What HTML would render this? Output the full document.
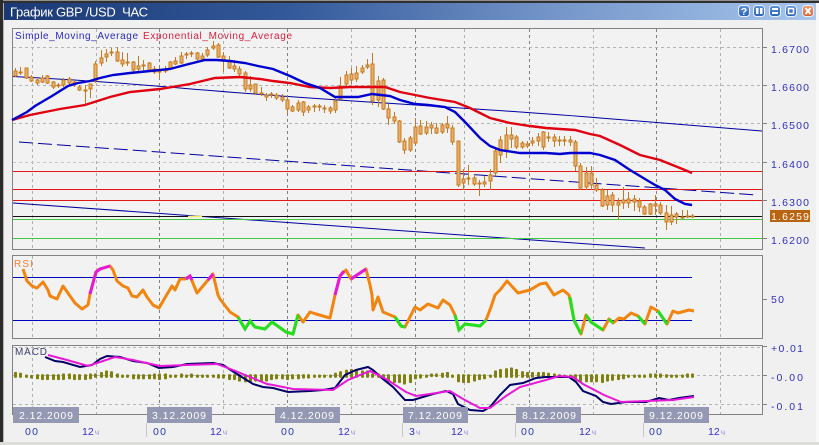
<!DOCTYPE html>
<html><head><meta charset="utf-8"><style>
html,body{margin:0;padding:0;background:#f0f0f0;width:819px;height:445px;overflow:hidden}
svg{display:block;font-family:"Liberation Sans","DejaVu Sans",sans-serif}
</style></head><body>
<svg width="819" height="445" viewBox="0 0 819 445" xmlns="http://www.w3.org/2000/svg">
<defs><linearGradient id="tb" x1="0" x2="1" y1="0" y2="0"><stop offset="0" stop-color="#1a3875"/><stop offset=".35" stop-color="#33599a"/><stop offset=".67" stop-color="#7394c8"/><stop offset="1" stop-color="#a6c6ec"/></linearGradient>
<linearGradient id="bb" x1="0" x2="0" y1="0" y2="1"><stop offset="0" stop-color="#5f94d8"/><stop offset="1" stop-color="#2a62b8"/></linearGradient>
<linearGradient id="br" x1="0" x2="0" y1="0" y2="1"><stop offset="0" stop-color="#f0a070"/><stop offset="1" stop-color="#d86030"/></linearGradient></defs>
<rect width="819" height="445" fill="#f0f0f0"/>
<rect x="0" y="0" width="819" height="1" fill="#909090"/>
<rect x="0" y="1" width="819" height="2" fill="#303030"/>
<rect x="0" y="0" width="3" height="445" fill="#2c2c2c"/>
<rect x="3" y="3" width="1" height="440" fill="#b8b4a8"/>
<rect x="816" y="3" width="3" height="442" fill="#f8f8f8"/>
<rect x="0" y="442" width="819" height="3" fill="#dcdcd8"/>
<rect x="4" y="3" width="812" height="17" fill="url(#tb)"/>
<text x="10" y="16.500" font-size="13" fill="#fff" textLength="138" xml:space="preserve">График GBP /USD  ЧАС</text>
<g stroke="#e8f0fa" stroke-width="1">
<rect x="738.500" y="5.500" width="11" height="11" rx="3" fill="url(#bb)"/>
<rect x="753.500" y="5.500" width="11" height="11" rx="3" fill="url(#bb)"/>
<rect x="769.500" y="5.500" width="11" height="11" rx="3" fill="url(#bb)"/>
<rect x="785.500" y="5.500" width="11" height="11" rx="3" fill="url(#bb)"/>
<rect x="802.500" y="5.500" width="11" height="11" rx="3" fill="url(#br)"/>
</g>
<text x="744" y="15" font-size="10.500" font-weight="bold" fill="#fff" text-anchor="middle">?</text>
<path d="M756 8h2.500v6h-2.500zM760 8h2.500v6h-2.500z" fill="#fff"/>
<path d="M772 8h6v2h-6zM772 12h6v2h-6z" fill="#fff"/>
<path d="M788.500 8.500h5v5h-5z" fill="none" stroke="#fff" stroke-width="1.500"/>
<path d="M805.500 8l5 6M810.500 8l-5 6" stroke="#fff" stroke-width="2"/>

<rect x="12.500" y="28.500" width="750" height="221" fill="#f2f2f2" stroke="#828282"/>
<rect x="12.500" y="255.500" width="750" height="83" fill="#f2f2f2" stroke="#828282"/>
<rect x="12.500" y="345.500" width="750" height="69" fill="#f2f2f2" stroke="#828282"/>

<g fill="none" stroke-dasharray="3 3">
<path d="M32.500 29V249M96.500 29V249M223.500 29V249M351.500 29V249M464.500 29V249M593.500 29V249M720.500 29V249M32.500 256V338M96.500 256V338M223.500 256V338M351.500 256V338M464.500 256V338M593.500 256V338M720.500 256V338M32.500 346V414M96.500 346V414M223.500 346V414M351.500 346V414M464.500 346V414M593.500 346V414M720.500 346V414" stroke="#b0b0b0"/>
<path d="M159.500 29V249M287.500 29V249M415.500 29V249M529.500 29V249M656.500 29V249M159.500 256V338M287.500 256V338M415.500 256V338M529.500 256V338M656.500 256V338M159.500 346V414M287.500 346V414M415.500 346V414M529.500 346V414M656.500 346V414" stroke="#808080"/>
<path d="M13 47.500H762M13 85.500H762M13 123.500H762M13 347.500H762M13 375.500H762M13 404.500H762" stroke="#b4b4b4"/>
<path d="M13 162.500H762" stroke="#c0c8d0"/>
</g>
<path d="M762 47.500h5M762 85.500h5M762 123.500h5M762 162.500h5M762 200.500h5M762 238.500h5M762 299.500h5M762 346.500h5M762 375.500h5M762 404.500h5" stroke="#808080"/>

<path d="M13 76.500Q100 81 180 88T400 104T600 118T762 131" fill="none" stroke="#0000a0" stroke-width="1"/>
<path d="M19 142L757 195" fill="none" stroke="#0000a0" stroke-width="1" stroke-dasharray="14 5"/>
<path d="M13 203L645 248" fill="none" stroke="#0000a0" stroke-width="1"/>
<path d="M13 171.500H762M13 189.500H762M13 200.500H762" stroke="#e01818" stroke-width="1"/>
<path d="M13 216.500H762" stroke="#101010" stroke-width="1"/>
<path d="M188 216.500h14" stroke="#f0f060" stroke-width="1.500"/>
<path d="M13 219.500H762M13 238.500H762" stroke="#40c840" stroke-width="1"/>

<path fill="none" stroke="#c07a20" stroke-width="1" d="M15.500 68V77M20.500 67V75M26.500 68V79M31.500 75V82M37.500 79V85M42.500 75V83M47.500 75V84M53.500 81V89M58.500 83V88M63.500 78V87M69.500 77V85M74.500 80V87M79.500 85V91M85.500 85V105M90.500 84V98M95.500 61V83M101.500 50V66M106.500 49V62M111.500 48V56M117.500 47V62M122.500 52V67M127.500 53V66M133.500 61V73M138.500 56V71M143.500 60V71M149.500 62V71M154.500 66V74M159.500 68V78M165.500 66V73M170.500 61V69M175.500 57V65M181.500 52V64M186.500 52V59M191.500 51V57M197.500 52V61M202.500 53V61M207.500 47V57M213.500 41V50M218.500 43V58M223.500 52V72M229.500 56V69M234.500 60V72M239.500 66V76M245.500 71V92M250.500 76V92M255.500 84V95M261.500 87V96M266.500 93V101M271.500 92V98M276.500 93V100M282.500 94V102M287.500 96V114M292.500 105V112M298.500 100V112M303.500 101V116M308.500 105V113M314.500 104V112M319.500 104V111M324.500 105V113M330.500 106V114M335.500 96V113M340.500 77V100M346.500 71V88M351.500 68V84M356.500 66V82M362.500 65V74M367.500 59V69M372.500 53V105M378.500 76V107M383.500 78V110M388.500 104V125M394.500 112V124M399.500 120V143M404.500 138V154M410.500 136V152M415.500 118V145M420.500 120V135M426.500 121V135M431.500 122V134M436.500 123V134M442.500 123V134M447.500 116V133M452.500 125V145M458.500 141V187M463.500 169V190M468.500 165V185M474.500 174V186M479.500 180V196M484.500 176V187M490.500 169V190M495.500 147V176M500.500 136V163M506.500 127V158M511.500 127V148M516.500 135V149M522.500 141V149M527.500 141V148M532.500 137V146M538.500 133V146M543.500 131V150M548.500 132V142M554.500 134V147M559.500 136V146M564.500 136V146M570.500 136V146M575.500 140V171M580.500 163V190M586.500 167V190M591.500 166V190M596.500 178V192M602.500 188V207M607.500 190V210M612.500 192V212M618.500 198V219M623.500 187V209M628.500 192V208M634.500 195V211M639.500 198V212M644.500 205V215M650.500 203V215M655.500 195V215M660.500 202V215M666.500 205V230M671.500 206V225M676.500 212V224M682.500 210V219M687.500 210V218M692.500 214V218"/>
<path fill="#eab06a" stroke="#c67a1e" stroke-width="1" d="M14 71h3v5h-3zM19 72h3v1h-3zM25 68h3v10h-3zM30 77h3v4h-3zM36 80h3v3h-3zM41 78h3v4h-3zM46 76h3v7h-3zM52 82h3v5h-3zM57 85h3v1h-3zM62 80h3v5h-3zM68 79h3v4h-3zM73 82h3v2h-3zM78 87h3v3h-3zM84 90h3v1h-3zM89 84h3v5h-3zM94 64h3v17h-3zM100 58h3v5h-3zM105 54h3v3h-3zM110 52h3v1h-3zM116 52h3v9h-3zM121 60h3v4h-3zM126 62h3v1h-3zM132 62h3v8h-3zM137 66h3v3h-3zM142 65h3v1h-3zM148 63h3v7h-3zM153 69h3v3h-3zM158 71h3v1h-3zM164 69h3v2h-3zM169 62h3v6h-3zM174 61h3v3h-3zM180 56h3v7h-3zM185 54h3v1h-3zM190 53h3v1h-3zM196 53h3v6h-3zM201 56h3v3h-3zM206 50h3v5h-3zM212 46h3v2h-3zM217 45h3v12h-3zM222 56h3v4h-3zM228 61h3v7h-3zM233 66h3v3h-3zM238 69h3v5h-3zM244 73h3v16h-3zM249 85h3v4h-3zM254 84h3v9h-3zM260 93h3v1h-3zM265 95h3v2h-3zM270 94h3v1h-3zM275 95h3v3h-3zM281 97h3v3h-3zM286 100h3v9h-3zM291 107h3v4h-3zM297 103h3v7h-3zM302 102h3v10h-3zM307 107h3v3h-3zM313 106h3v1h-3zM318 106h3v1h-3zM323 108h3v1h-3zM329 108h3v3h-3zM334 101h3v9h-3zM339 86h3v13h-3zM345 75h3v9h-3zM350 74h3v6h-3zM355 73h3v6h-3zM361 68h3v4h-3zM366 65h3v2h-3zM371 64h3v37h-3zM377 81h3v19h-3zM382 80h3v29h-3zM387 109h3v9h-3zM393 117h3v4h-3zM398 121h3v21h-3zM403 141h3v9h-3zM409 138h3v12h-3zM414 127h3v16h-3zM419 126h3v8h-3zM425 127h3v6h-3zM430 125h3v3h-3zM435 128h3v5h-3zM441 125h3v7h-3zM446 124h3v4h-3zM451 128h3v14h-3zM457 141h3v44h-3zM462 179h3v4h-3zM467 178h3v1h-3zM473 178h3v6h-3zM478 183h3v1h-3zM483 182h3v2h-3zM489 175h3v6h-3zM494 151h3v22h-3zM499 140h3v15h-3zM505 135h3v15h-3zM510 135h3v4h-3zM515 137h3v10h-3zM521 143h3v4h-3zM526 144h3v2h-3zM531 141h3v2h-3zM537 137h3v4h-3zM542 132h3v15h-3zM547 137h3v1h-3zM553 137h3v4h-3zM558 140h3v1h-3zM563 140h3v1h-3zM569 140h3v2h-3zM574 142h3v24h-3zM579 166h3v22h-3zM585 173h3v14h-3zM590 173h3v12h-3zM595 185h3v5h-3zM601 190h3v16h-3zM606 196h3v9h-3zM611 195h3v10h-3zM617 202h3v3h-3zM622 200h3v3h-3zM627 199h3v4h-3zM633 199h3v3h-3zM638 201h3v6h-3zM643 207h3v7h-3zM649 204h3v10h-3zM654 204h3v2h-3zM659 205h3v8h-3zM665 213h3v9h-3zM670 215h3v7h-3zM675 214h3v3h-3zM681 217h3v1h-3zM686 216h3v1h-3zM691 216h3v1h-3z"/>

<polyline fill="none" stroke="#e00010" stroke-width="2.400" points="12,120 30,115 60,109 85,105 110,97 130,92 160,89 190,84 215,78 240,77 260,79 273,81 290,83 310,87 330,88 350,87 385,87 400,92 415,95 430,98 455,102 470,108 490,118 510,123 530,126 546,128 575,130 590,134 600,136 620,145 640,155 660,160 680,168 692,173"/>
<polyline fill="none" stroke="#0000d0" stroke-width="2.400" points="12,120 27,112 35,106 52,96 68,86 78,83 90,81 100,78 113,75 130,73 150,71 170,69 185,65 205,60 217,60 230,61 245,63 258,66 273,69 290,76 305,83 320,88 335,97 345,97 358,97 372,94 390,96 400,100 415,104 428,105 445,107 455,112 465,122 480,138 490,146 500,150 520,153 546,153 560,154 570,153 590,153 600,155 615,160 630,170 645,179 655,185 665,190 675,199 685,204 692,205"/>

<text x="15" y="39" font-size="10" fill="#2a2ac0" textLength="123">Simple_Moving_Average</text>
<text x="143" y="39" font-size="10" fill="#d82040" textLength="149">Exponential_Moving_Average</text>

<path d="M13 277.500H692M13 320.500H692" stroke="#0000c0" stroke-width="1"/>
<polyline fill="none" stroke="#f28410" stroke-width="3" stroke-linejoin="round" points="23,269 27,281 32,286 37,288 43,282 48,290 50,296 57,299 63,286 70,296 75,303 82,309 88,305 90,294 96,272 100,269 110,266 113,270 117,281 123,286 128,288 132,296 137,297 143,290 147,297 153,305 159,308 166,296 172,286 175,290 180,279 185,279 190,276 197,293 203,286 208,280 213,274 218,295 220,299 230,312 238,317 245,329 250,321 255,327 265,329 272,322 286,332 293,334 298,315 303,322 310,312 316,314 330,318 335,295 340,276 346,270 351,279 366,269 370,285 372,295 373,310 378,297 383,312 395,317 401,326 405,327 415,307 420,310 428,304 438,308 443,300 450,305 455,315 459,330 465,324 480,326 486,320 491,307 495,295 500,290 507,281 518,293 530,290 540,284 546,283 554,295 563,290 569,295 574,320 581,334 586,315 591,322 603,330 609,319 613,323 619,318 624,319 631,313 638,316 645,324 651,307 658,311 667,324 673,311 678,313 689,310 694,311"/>
<path fill="none" stroke="#e818d8" stroke-width="3" d="M90 294L96 272 100 269 110 266M186 279L190 276 192 280M208 280L213 274M335 295L340 276 344 271M351 279L366 269"/>
<path fill="none" stroke="#20e020" stroke-width="3" d="M238 317L245 329 250 321 255 327 265 329 272 322 286 332 293 334 298 315M395 317L401 326 405 327M455 315L459 330 465 324 480 326 486 320M570 297L574 320 581 334M586 315L591 322 603 330M609 319L613 323M638 316L645 324M658 311L667 324"/>
<text x="14" y="267" font-size="10" fill="#f08030" textLength="19">RSI</text>
<text x="771" y="303" font-size="10.500" fill="#3030c0" textLength="13">50</text>

<path transform="translate(0,94) scale(1,.75)" fill="none" stroke="#808010" stroke-width="3" stroke-linecap="round" d="M15.500 372V377M20.500 373V377M26.500 375.500V377M31.500 376V378M37.500 375V379M42.500 375V380M47.500 375V380M53.500 375V380M58.500 375V380M63.500 374V380M69.500 374V379M74.500 375V380M79.500 375V380M85.500 375V380M90.500 374V379M95.500 374V377M101.500 372V377M106.500 370V377M111.500 371V377M117.500 374V377M122.500 375.500V377M127.500 375.500V377M133.500 375V379M138.500 375V379M143.500 375V379M149.500 375V379M154.500 374V379M159.500 374V380M165.500 374V379M170.500 375.500V377M175.500 375.500V377M181.500 374V377M186.500 375.500V377M191.500 374V377M197.500 375.500V377M202.500 375.500V377M207.500 375.500V377M213.500 375.500V377M218.500 375V378M223.500 375V378M229.500 375V380M234.500 375V380M239.500 375V382M245.500 375V383M250.500 375V383M255.500 375V382M261.500 375V382M266.500 375V382M271.500 375V380M276.500 375V379M282.500 375V379M287.500 375V380M292.500 375V379M298.500 375V379M303.500 375V378M308.500 375V378M314.500 375.500V377M319.500 375.500V377M324.500 375.500V377M330.500 375.500V377M335.500 373V377M340.500 371V377M346.500 369V377M351.500 368V377M356.500 369V377M362.500 370V377M367.500 370V377M372.500 374V377M378.500 374V377M383.500 375V380M388.500 375V383M394.500 375V384M399.500 375V384M404.500 375V386M410.500 375V384M415.500 375V379M420.500 375V378M426.500 375.500V377M431.500 374V376M436.500 374V376M442.500 373V377M447.500 372V377M452.500 375.500V377M458.500 375V383M463.500 375V384M468.500 375V384M474.500 375V382M479.500 375V380M484.500 375V379M490.500 375.500V377M495.500 370V377M500.500 368V377M506.500 367V377M511.500 366V377M516.500 368V377M522.500 371V377M527.500 372V377M532.500 372V377M538.500 372V377M543.500 372V377M548.500 373V377M554.500 374V377M559.500 375V377M564.500 375.500V377M570.500 375.500V377M575.500 375V382M580.500 375V383M586.500 375V383M591.500 375V383M596.500 375V383M602.500 375V384M607.500 375V382M612.500 375V381M618.500 375V380M623.500 375V379M628.500 375.500V377M634.500 375.500V377M639.500 375.500V377M644.500 375.500V377M650.500 374V377M655.500 374V377M660.500 374V377M666.500 375V377M671.500 375.500V377M676.500 375.500V377M682.500 375.500V377M687.500 374V377M692.500 374V377"/>
<polyline fill="none" stroke="#000068" stroke-width="2" points="45,357 55,361 63,362 80,367 92,365 100,359 107,356 120,357 133,361 147,363 159,368 173,367 187,364 213,363 223,365 237,374 253,384 263,387 273,388 288,392 310,391 323,390 335,388 345,375 356,370 368,367 373,370 383,379 393,387 405,400 413,400 433,394 446,391 453,394 458,404 470,410 483,411 490,407 500,395 510,385 523,383 536,378 546,377 569,377 576,382 583,391 596,396 603,402 611,404 626,402 646,402 659,398 669,400 679,398 694,396"/>
<polyline fill="none" stroke="#e818d8" stroke-width="2" points="48,355 67,360 88,366 100,362 115,357 133,360 160,366 187,365 217,364 233,370 267,384 273,385 293,389 333,390 348,380 370,371 386,379 406,392 416,396 450,391 463,399 480,408 490,408 506,396 520,387 546,380 559,376 573,377 583,384 604,395 621,402 646,401 673,400 694,397"/>
<text x="15" y="355" font-size="10" fill="#404070" textLength="32">MACD</text>

<g font-size="10.500" fill="#3030c0">
<text x="771" y="53" textLength="38">1.6700</text>
<text x="771" y="91" textLength="38">1.6600</text>
<text x="771" y="129" textLength="38">1.6500</text>
<text x="771" y="168" textLength="38">1.6400</text>
<text x="771" y="206" textLength="38">1.6300</text>
<text x="771" y="244" textLength="38">1.6200</text>
<text x="771" y="352" textLength="32">+0.01</text>
<text x="771" y="381" textLength="32">-0.00</text>
<text x="771" y="410" textLength="32">-0.01</text>
</g>
<rect x="770" y="210" width="40" height="12" fill="#b86410"/>
<text x="771" y="220" font-size="10.500" fill="#fff" textLength="38">1.6259</text>

<path d="M146.500 423V437M402.500 423V437M515.500 423V437M643.500 423V437" stroke="#c8c8c8"/>
<g fill="#9498b2">
<rect x="13" y="407" width="66" height="16"/>
<rect x="147" y="407" width="65" height="16"/>
<rect x="275" y="407" width="65" height="16"/>
<rect x="403" y="407" width="65" height="16"/>
<rect x="516" y="407" width="65" height="16"/>
<rect x="644" y="407" width="65" height="16"/>
</g>
<g font-size="10.500" fill="#fff">
<text x="19" y="419" textLength="54">2.12.2009</text>
<text x="152" y="419" textLength="54">3.12.2009</text>
<text x="280" y="419" textLength="54">4.12.2009</text>
<text x="408" y="419" textLength="54">7.12.2009</text>
<text x="522" y="419" textLength="54">8.12.2009</text>
<text x="649" y="419" textLength="54">9.12.2009</text>
</g>
<g font-size="10.500" fill="#3030c0">
<text x="25" y="435" textLength="13">00</text>
<text x="82" y="435">12<tspan font-size="8.500" fill="#8c98d0" dx="1">ч</tspan></text>
<text x="153" y="435" textLength="13">00</text>
<text x="210" y="435">12<tspan font-size="8.500" fill="#8c98d0" dx="1">ч</tspan></text>
<text x="281" y="435" textLength="13">00</text>
<text x="338" y="435">12<tspan font-size="8.500" fill="#8c98d0" dx="1">ч</tspan></text>
<text x="409" y="435">3<tspan font-size="8.500" fill="#8c98d0" dx="1">ч</tspan></text>
<text x="451" y="435">12<tspan font-size="8.500" fill="#8c98d0" dx="1">ч</tspan></text>
<text x="521" y="435" textLength="13">00</text>
<text x="579" y="435">12<tspan font-size="8.500" fill="#8c98d0" dx="1">ч</tspan></text>
<text x="649" y="435" textLength="13">00</text>
<text x="708" y="435">12<tspan font-size="8.500" fill="#8c98d0" dx="1">ч</tspan></text>
</g>
</svg>
</body></html>
